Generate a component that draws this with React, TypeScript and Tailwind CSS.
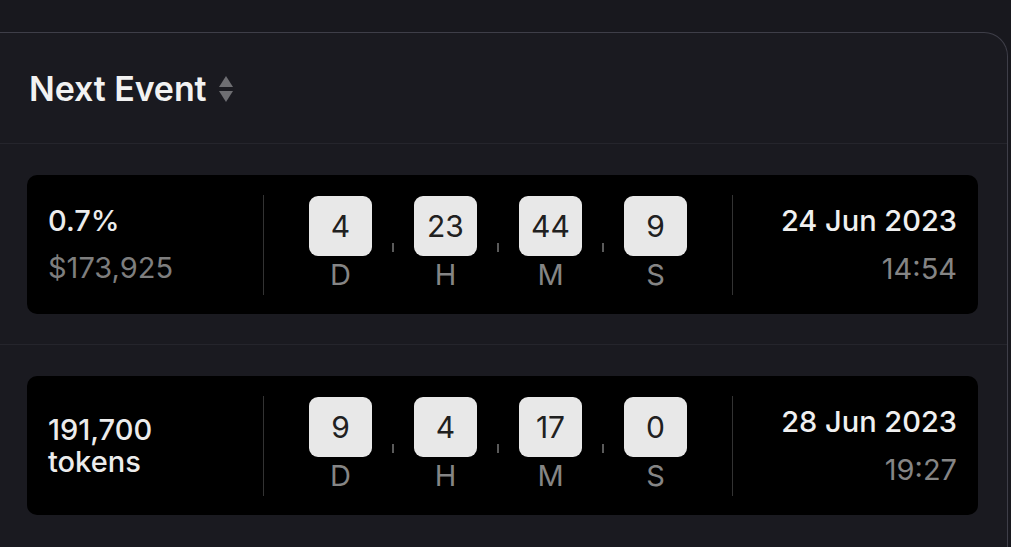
import React from "react";

type Row = {
  primary: string;
  secondary?: string;
  wrap?: boolean;
  countdown: { value: number; label: string }[];
  date: string;
  time: string;
};

const rows: Row[] = [
  {
    primary: "0.7%",
    secondary: "$173,925",
    countdown: [
      { value: 4, label: "D" },
      { value: 23, label: "H" },
      { value: 44, label: "M" },
      { value: 9, label: "S" },
    ],
    date: "24 Jun 2023",
    time: "14:54",
  },
  {
    primary: "191,700",
    secondary: "tokens",
    wrap: true,
    countdown: [
      { value: 9, label: "D" },
      { value: 4, label: "H" },
      { value: 17, label: "M" },
      { value: 0, label: "S" },
    ],
    date: "28 Jun 2023",
    time: "19:27",
  },
];

const SortIcon = () => (
  <svg width="16" height="27" viewBox="0 0 16 27" className="ml-[12px] mt-[3px]">
    <path d="M8 0 L15 11 L1 11 Z" fill="#6e6e72" />
    <path d="M1 15 L15 15 L8 26 Z" fill="#6e6e72" />
  </svg>
);

const Countdown = ({ items }: { items: Row["countdown"] }) => (
  <div className="flex items-start">
    {items.map((it, i) => (
      <React.Fragment key={it.label}>
        {i > 0 && (
          <div className="w-[42px] flex justify-center pt-[47px]">
            <div className="w-[2px] h-[9px] bg-[#5a5a5a]" />
          </div>
        )}
        <div className="flex flex-col items-center">
          <div className="w-[63px] h-[60px] rounded-[9px] bg-[#e8e8e8] flex items-center justify-center text-[30px] text-[#202020] leading-none">
            {it.value}
          </div>
          <div className="text-[29px] leading-[36px] text-[#858585] mt-[1px]">{it.label}</div>
        </div>
      </React.Fragment>
    ))}
  </div>
);

const EventRow = ({ row, last }: { row: Row; last?: boolean }) => (
  <div className={`pl-[27px] pr-[29px] pt-[31px] pb-[30px] ${last ? "" : "border-b border-[#25252c]"}`}>
    <div className="h-[139px] rounded-[10px] bg-black flex items-center px-[21px]">
      <div className="w-[215px] text-[29px]">
        {row.wrap ? (
          <div className="text-[#ececec] font-medium leading-[32px]">
            <div>{row.primary}</div>
            <div>{row.secondary}</div>
          </div>
        ) : (
          <div className="leading-[36px]">
            <div className="text-[#ececec] font-medium">{row.primary}</div>
            <div className="text-[#7e7e7e] mt-[11px]">{row.secondary}</div>
          </div>
        )}
      </div>
      <div className="w-px h-[100px] bg-[#333333]" />
      <div className="flex-1 flex justify-center">
        <Countdown items={row.countdown} />
      </div>
      <div className="w-px h-[100px] bg-[#333333]" />
      <div className="w-[224px] text-right text-[29px] leading-[36px]">
        <div className="text-[#f0f0f0] font-medium">{row.date}</div>
        <div className="text-[#858585] mt-[12px]">{row.time}</div>
      </div>
    </div>
  </div>
);

export default function App() {
  return (
    <div
      className="w-[1011px] h-[547px] overflow-hidden bg-[#18181e] pt-[32px]"
      style={{ fontFamily: "Inter, 'Noto Sans', sans-serif" }}
    >
      <div className="mr-[3px] h-[600px] bg-[#1a1a20] border-t border-r border-[#3e3e48] rounded-tr-[24px]">
        <div className="h-[111px] flex items-center pl-[29px] border-b border-[#25252c]">
          <span className="text-[34px] font-semibold text-[#f2f2f2] tracking-[-0.1px]">Next Event</span>
          <SortIcon />
        </div>
        {rows.map((r, i) => (
          <EventRow key={i} row={r} last={i === rows.length - 1} />
        ))}
      </div>
    </div>
  );
}
